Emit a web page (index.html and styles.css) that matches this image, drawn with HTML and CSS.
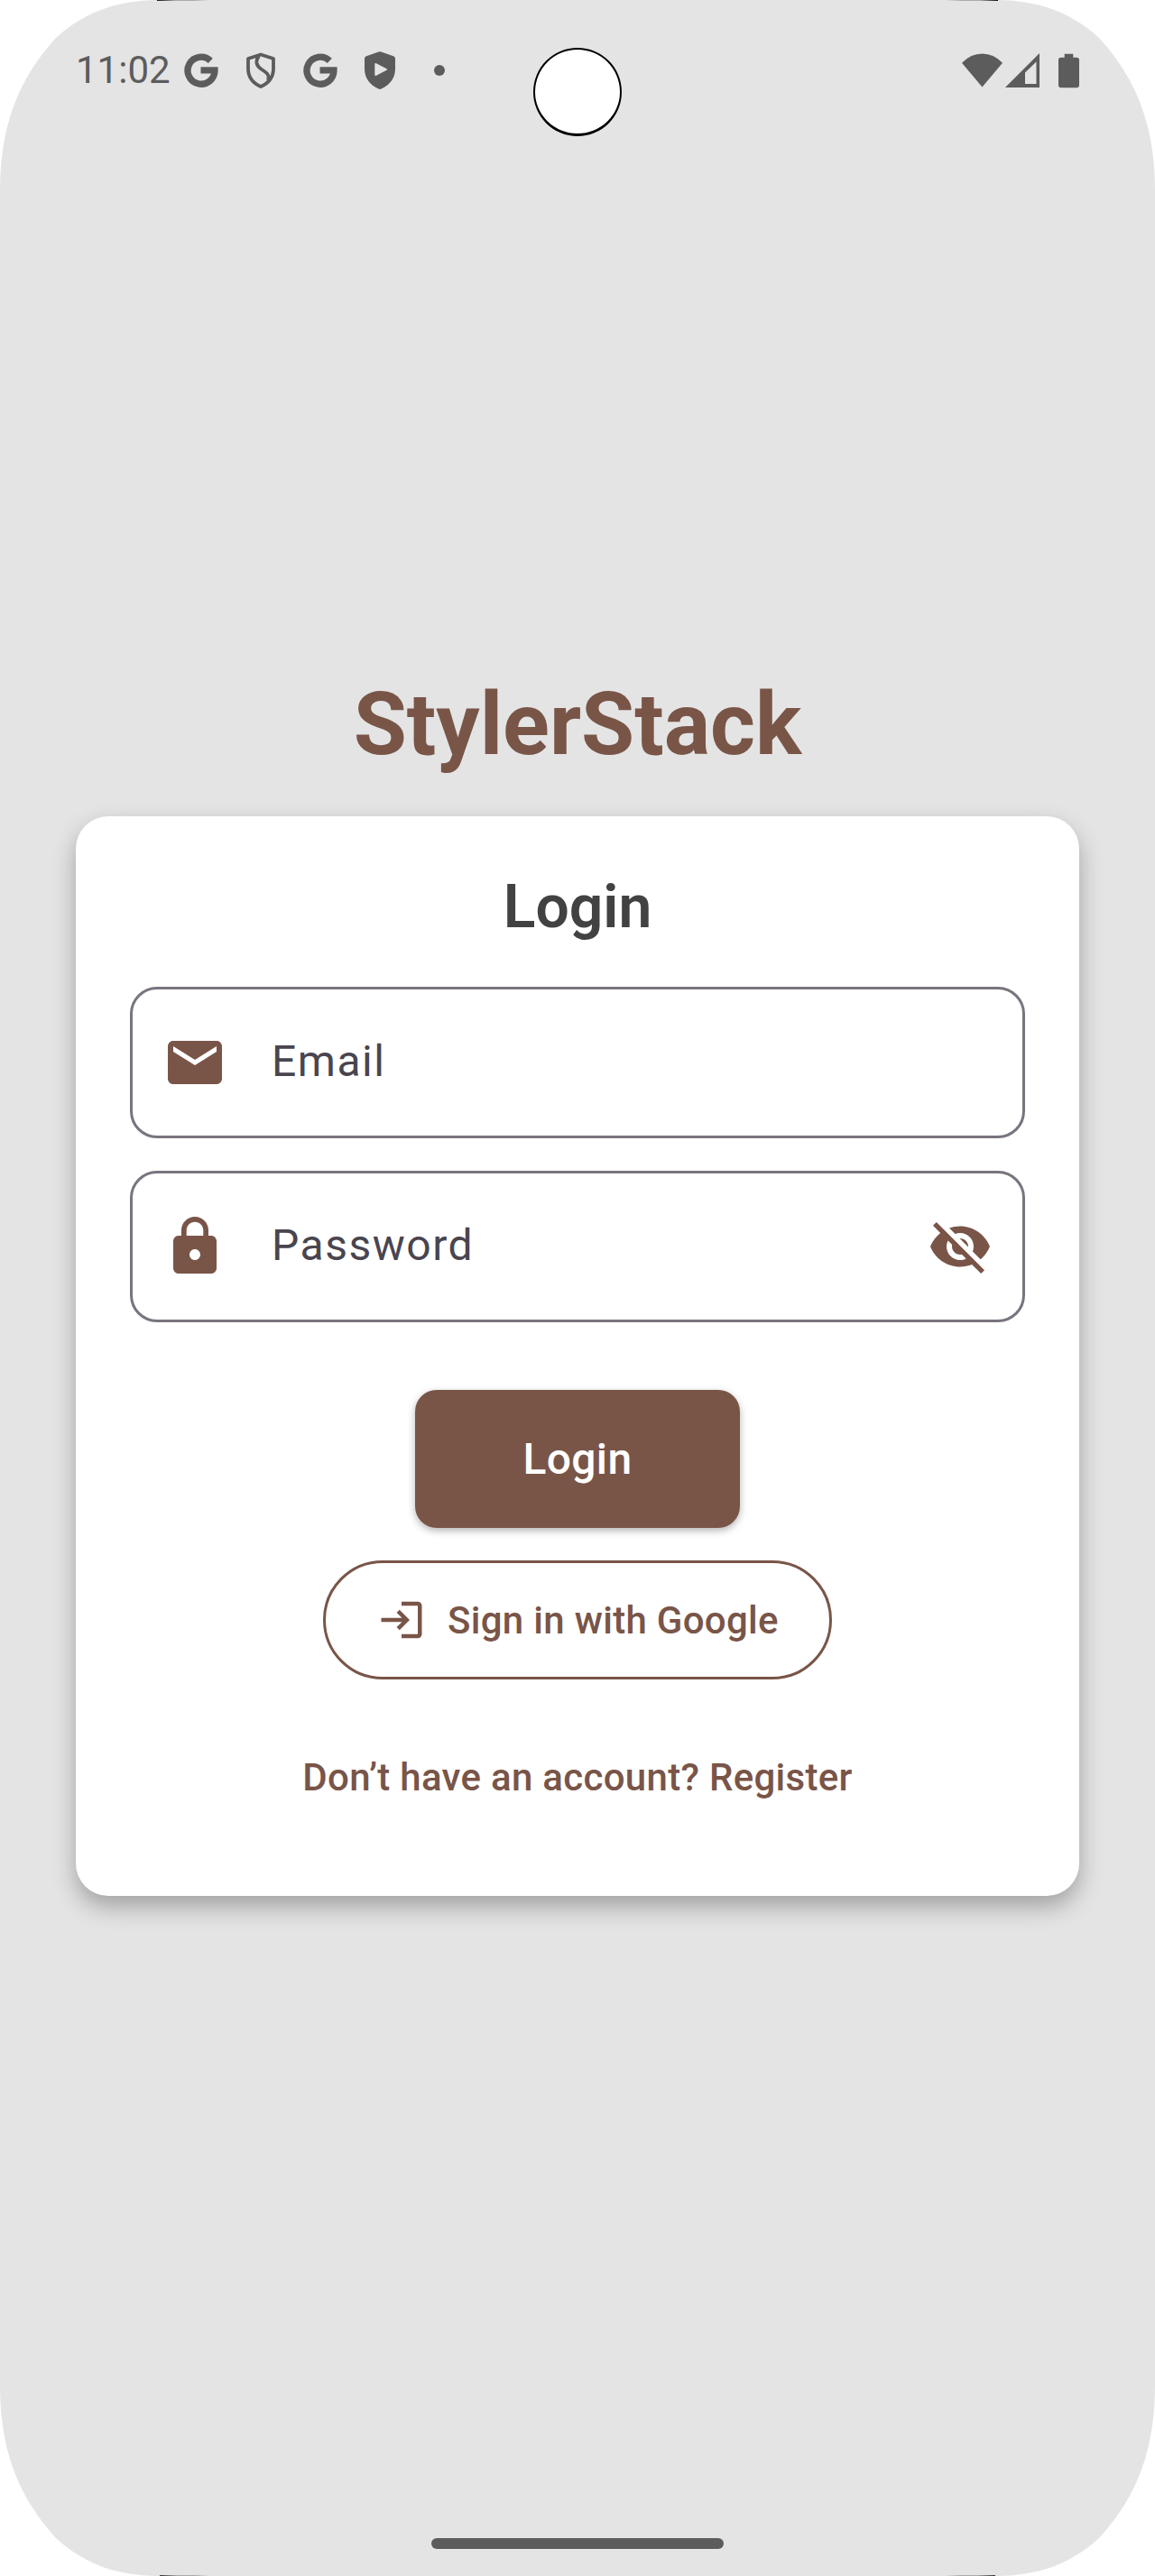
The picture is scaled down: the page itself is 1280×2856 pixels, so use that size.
FILE: index.html
```html
<!DOCTYPE html>
<html lang="en">
<head>
<meta charset="utf-8">
<title>StylerStack</title>
<link rel="stylesheet" href="styles.css">
</head>
<body>
<div class="screen">
  <header class="status">
    <span class="time">11:02</span>
    <div class="notifications">
      <svg class="g-icon" viewBox="0 0 38 38"><path d="M29.3 8.300A15 15 0 1 0 34 18.800H18.500" fill="none" stroke="currentColor" stroke-width="7.300"/></svg>
      <svg class="shield" viewBox="0 0 34 40"><path d="M17 2.500 31 7V18C31 27 26 34 17 38 8 34 3 27 3 18V7ZM15 4C10.500 10 12 15 18 19 24 23 27 25 25 31" fill="none" stroke="currentColor" stroke-width="3.800" stroke-linejoin="round"/></svg>
      <svg class="g-icon" viewBox="0 0 38 38"><path d="M29.3 8.300A15 15 0 1 0 34 18.800H18.500" fill="none" stroke="currentColor" stroke-width="7.300"/></svg>
      <svg class="shield-play" viewBox="0 0 34 42"><path fill-rule="evenodd" fill="currentColor" d="M15.500.5Q17-.2 18.500.5L32 5.200Q34 6 34 8V19C34 30 28 37 18.500 41.500Q17 42.300 15.500 41.500C6 37 0 30 0 19V8Q0 6 2 5.200ZM11.300 14V26Q11.500 27.500 13 26.800L24.500 20.800Q25.500 20 24.500 19.200L13 13.200Q11.500 12.500 11.300 14Z"/></svg>
      <span class="dot"></span>
    </div>
    <div class="system">
      <svg class="wifi" viewBox="0 0 46 38"><path d="M0 10.500Q10 0 23 0T46 10.500L23 38Z" fill="currentColor"/></svg>
      <svg class="signal" viewBox="0 0 38 38"><path fill-rule="evenodd" d="M38 0V38H0ZM34.500 9.500 22 21.500V34H34.500Z" fill="currentColor"/></svg>
      <svg class="battery" viewBox="0 0 24 39"><path d="M7 0H17V4H21Q24 4 24 7V36Q24 39 21 39H3Q0 39 0 36V7Q0 4 3 4H7Z" fill="currentColor"/></svg>
    </div>
  </header>
  <span class="camera"></span>

  <main class="content">
    <h1 class="brand">StylerStack</h1>
    <section class="card">
      <h2 class="card-title">Login</h2>
      <div class="field">
        <svg class="icon" viewBox="0 0 24 24"><path fill="currentColor" d="M20 4H4c-1.100 0-1.990.9-1.990 2L2 18c0 1.100.9 2 2 2h16c1.100 0 2-.9 2-2V6c0-1.100-.9-2-2-2zm0 4l-8 5-8-5V6l8 5 8-5v2z"/></svg>
        <span class="label">Email</span>
      </div>
      <div class="field">
        <svg class="icon" viewBox="0 0 24 24"><path fill="currentColor" d="M18 8h-1V6c0-2.760-2.240-5-5-5S7 3.240 7 6v2H6c-1.100 0-2 .9-2 2v10c0 1.100.9 2 2 2h12c1.100 0 2-.9 2-2V10c0-1.100-.9-2-2-2zm-6 9c-1.100 0-2-.9-2-2s.9-2 2-2 2 .9 2 2-.9 2-2 2zm3.100-9H8.900V6c0-1.710 1.390-3.100 3.100-3.100s3.100 1.390 3.100 3.100v2z"/></svg>
        <span class="label">Password</span>
        <svg class="icon" viewBox="0 0 24 24"><path fill="currentColor" d="M12 7c2.760 0 5 2.240 5 5 0 .65-.13 1.260-.36 1.830l2.920 2.920c1.510-1.260 2.700-2.890 3.430-4.750-1.730-4.390-6-7.500-11-7.500-1.400 0-2.740.25-3.980.7l2.160 2.160C10.740 7.130 11.350 7 12 7zM2 4.270l2.280 2.280.46.46C3.080 8.300 1.780 10.020 1 12c1.730 4.390 6 7.500 11 7.500 1.550 0 3.030-.3 4.380-.84l.42.42L19.730 22 21 20.730 3.270 3 2 4.270zM7.530 9.800l1.550 1.550c-.05.21-.08.43-.08.65 0 1.660 1.340 3 3 3 .22 0 .44-.03.65-.08l1.550 1.550c-.67.33-1.410.53-2.200.53-2.760 0-5-2.240-5-5 0-.79.2-1.530.53-2.200zm4.310-.78l3.150 3.150.02-.16c0-1.660-1.340-3-3-3l-.17.01z"/></svg>
      </div>
      <button class="primary">Login</button>
      <button class="google">
        <svg class="small-icon" viewBox="0 0 24 24"><path fill="currentColor" d="M11 7 9.600 8.400l2.600 2.600H2v2h10.200l-2.600 2.600L11 17l5-5-5-5zm9 12h-8v2h8c1.100 0 2-.9 2-2V5c0-1.100-.9-2-2-2h-8v2h8v14z"/></svg>
        <span>Sign in with Google</span>
      </button>
      <a class="register">Don’t have an account? Register</a>
    </section>
  </main>
  <span class="home-bar"></span>
</div>
</body>
</html>
```
FILE: styles.css
```css
* { box-sizing: border-box; }

body {
  margin: 0;
  background: #fff;
  font-family: Roboto, sans-serif;
}

svg { display: block; flex: none; }

.screen {
  position: relative;
  width: 1280px;
  height: 2856px;
  display: flex;
  flex-direction: column;
  align-items: center;
  overflow: hidden;
  background:
    linear-gradient(90deg, #111, #aaa 35%, #aaa 70%, #e4e4e4) 174px 0 / 58px 1px no-repeat,
    linear-gradient(270deg, #111, #aaa 35%, #aaa 70%, #e4e4e4) 1048px 0 / 58px 1px no-repeat,
    linear-gradient(90deg, #333, #aaa 35%, #aaa 70%, #e4e4e4) 177px 100% / 55px 1px no-repeat,
    linear-gradient(270deg, #333, #aaa 35%, #aaa 70%, #e4e4e4) 1048px 100% / 55px 1px no-repeat,
    #e4e4e4;
  clip-path: path("M0 212C0 140 20 88 62 42C95 12 130 1 174 0H1106C1150 1 1185 12 1218 42C1260 88 1280 140 1280 212V2644C1280 2716 1260 2768 1218 2814C1185 2844 1150 2855 1106 2856H174C130 2855 95 2844 62 2814C20 2768 0 2716 0 2644Z");
}

.status {
  width: 100%;
  height: 156px;
  padding: 0 84px;
  display: flex;
  align-items: center;
  color: #5c5c5c;
}

.time {
  width: 120px;
  font-size: 42px;
  line-height: 50px;
}

.notifications {
  display: flex;
  align-items: center;
}

.g-icon { width: 38px; height: 38px; }
.shield { width: 34px; height: 40px; margin: 0 30px; }
.shield-play { width: 34px; height: 42px; margin-left: 30px; }
.dot { width: 12px; height: 12px; margin-left: 43px; border-radius: 50%; background: #5c5c5c; }

.system {
  display: flex;
  align-items: center;
  margin-left: auto;
}

.wifi { width: 45px; height: 38px; }
.signal { width: 38px; height: 38px; margin-left: 3px; }
.battery { width: 23px; height: 39px; margin-left: 21px; }

.camera {
  position: absolute;
  left: 591px;
  top: 53px;
  width: 98px;
  height: 98px;
  border: 2px solid #000;
  border-bottom-width: 3px;
  border-radius: 50%;
  background: #fff;
}

.content {
  width: 1112px;
  padding-top: 591px;
}

.brand {
  margin: 0 0 46px;
  font-size: 96px;
  line-height: 112px;
  font-weight: 700;
  text-align: center;
  color: #795548;
}

.card {
  height: 1197px;
  padding: 61px 60px 60px;
  display: flex;
  flex-direction: column;
  align-items: center;
  border-radius: 36px;
  background: #fff;
  box-shadow: 0 12px 26px rgba(0, 0, 0, .29);
}

.card-title {
  margin: 0 0 48px;
  font-size: 66px;
  line-height: 80px;
  font-weight: 600;
  color: #424242;
}

.field {
  width: 992px;
  height: 168px;
  margin-bottom: 36px;
  padding: 0 33px;
  display: flex;
  align-items: center;
  border: 3px solid #79747e;
  border-radius: 30px;
  color: #795548;
}

.icon { width: 72px; height: 72px; }

.label {
  flex: 1;
  margin-left: 49px;
  padding-bottom: 2px;
  font-size: 48px;
  line-height: 72px;
  letter-spacing: 1.5px;
  color: #49454f;
}

.primary {
  width: 360px;
  height: 153px;
  margin: 39px 0 36px;
  padding: 0;
  border: 0;
  border-radius: 24px;
  background: #795548;
  box-shadow: 0 3px 8px rgba(0, 0, 0, .3);
  color: #fff;
  font: 500 48px/56px Roboto, sans-serif;
  letter-spacing: .3px;
}

.google {
  width: 564px;
  height: 132px;
  padding: 0 0 0 57px;
  display: flex;
  align-items: center;
  gap: 24px;
  border: 3px solid #795548;
  border-radius: 66px;
  background: none;
  color: #795548;
  font: 500 42px/60px Roboto, sans-serif;
  letter-spacing: .3px;
  white-space: nowrap;
}

.google span { padding-top: 1px; }

.small-icon { width: 54px; height: 54px; }

.register {
  margin-top: 79px;
  font-size: 42px;
  line-height: 60px;
  font-weight: 500;
  letter-spacing: .3px;
  color: #795548;
}

.home-bar {
  position: absolute;
  left: 478px;
  bottom: 30px;
  width: 324px;
  height: 12px;
  border-radius: 6px;
  background: #5c5c5c;
}
```
